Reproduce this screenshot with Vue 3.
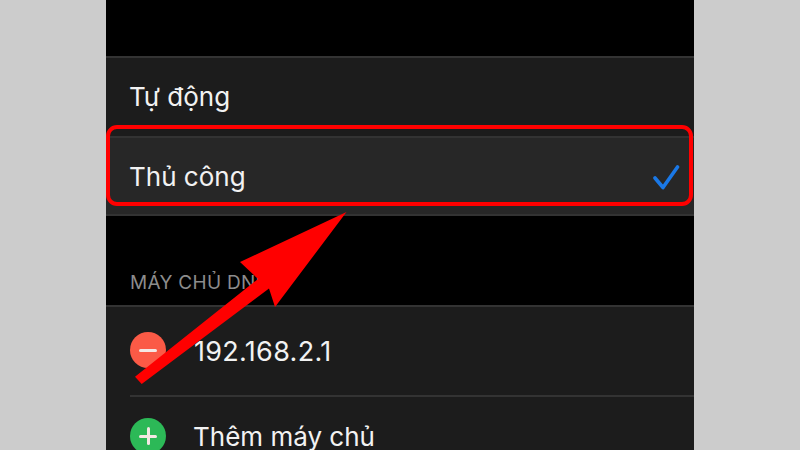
<script setup>
const modes = [
  { label: 'Tự động', selected: false },
  { label: 'Thủ công', selected: true },
]
</script>

<template>
  <div class="stage">
    <main class="phone">
      <section class="card first">
        <div v-for="m in modes" :key="m.label" class="mode" :class="{ selected: m.selected }">
          <span>{{ m.label }}</span>
          <svg v-if="m.selected" class="check" width="28" height="26" viewBox="0 0 28 26">
            <path d="M3 14 L11 23.5 L25.5 3" fill="none" stroke="#1a78e6" stroke-width="3.6" stroke-linecap="round" stroke-linejoin="round" />
          </svg>
        </div>
      </section>
      <h2 class="label">MÁY CHỦ DNS</h2>
      <section class="card">
        <div class="server">
          <span class="dot red"><i class="bar"></i></span>
          <span class="ip">192.168.2.1</span>
        </div>
        <div class="server add">
          <span class="dot green"><i class="bar"></i><i class="bar vert"></i></span>
          <span>Thêm máy chủ</span>
        </div>
      </section>
    </main>
    <div class="highlight"></div>
    <svg class="arrow" width="800" height="450" viewBox="0 0 800 450">
      <polygon points="346.5,212 240,262 258,279 135,376.7 141.7,384 269,288.5 275,307" fill="#ff0000" />
    </svg>
  </div>
</template>

<style>
body { margin: 0; background: #cccccc; }
</style>

<style scoped>
.stage {
  position: relative;
  width: 800px;
  height: 450px;
  overflow: hidden;
  background: #cccccc;
  display: flex;
  justify-content: center;
  font-family: Inter, "Noto Sans", sans-serif;
}
.phone {
  width: 588px;
  height: 450px;
  background: #000;
  padding-top: 56px;
  box-sizing: border-box;
  overflow: hidden;
  color: #f2f2f2;
}
.card {
  background: #1c1c1c;
  border-top: 2px solid #333;
}
.card.first {
  border-bottom: 2px solid #333;
}
.mode {
  height: 78px;
  box-sizing: border-box;
  padding: 0 14px 2px 23px;
  display: flex;
  align-items: center;
  justify-content: space-between;
  font-size: 26px;
}
.mode.selected {
  background: #272727;
  border-top: 2px solid #333;
  padding-bottom: 0;
}
.check {
  margin-top: 2px;
}
.label {
  margin: 0;
  padding: 55px 24px 0;
  height: 89px;
  box-sizing: border-box;
  font-size: 19px;
  line-height: 24px;
  font-weight: 400;
  letter-spacing: 0.3px;
  color: #8c8c8c;
}
.server {
  margin-left: 24px;
  height: 90px;
  box-sizing: border-box;
  display: flex;
  align-items: center;
  gap: 27px;
  font-size: 26px;
  border-bottom: 2px solid #333;
}
.server.add {
  height: 78px;
  border-bottom: 0;
}
.ip {
  font-size: 27px;
  letter-spacing: 0.3px;
  padding-top: 1px;
  margin-left: 1px;
}
.dot {
  position: relative;
  width: 36px;
  height: 36px;
  border-radius: 50%;
  flex: none;
}
.dot.red {
  background: #fb5a46;
  margin-top: -2px;
}
.dot.green { background: #2cb957; }
.bar {
  position: absolute;
  left: 9px;
  top: 16.5px;
  width: 18px;
  height: 3px;
  border-radius: 2px;
  background: #f4e8e4;
}
.bar.vert {
  left: 16.5px;
  top: 9px;
  width: 3px;
  height: 18px;
}
.highlight {
  position: absolute;
  left: 106px;
  top: 125px;
  width: 587px;
  height: 81px;
  box-sizing: border-box;
  border: 4px solid #ff0000;
  border-radius: 11px;
}
.arrow {
  position: absolute;
  left: 0;
  top: 0;
}
</style>
